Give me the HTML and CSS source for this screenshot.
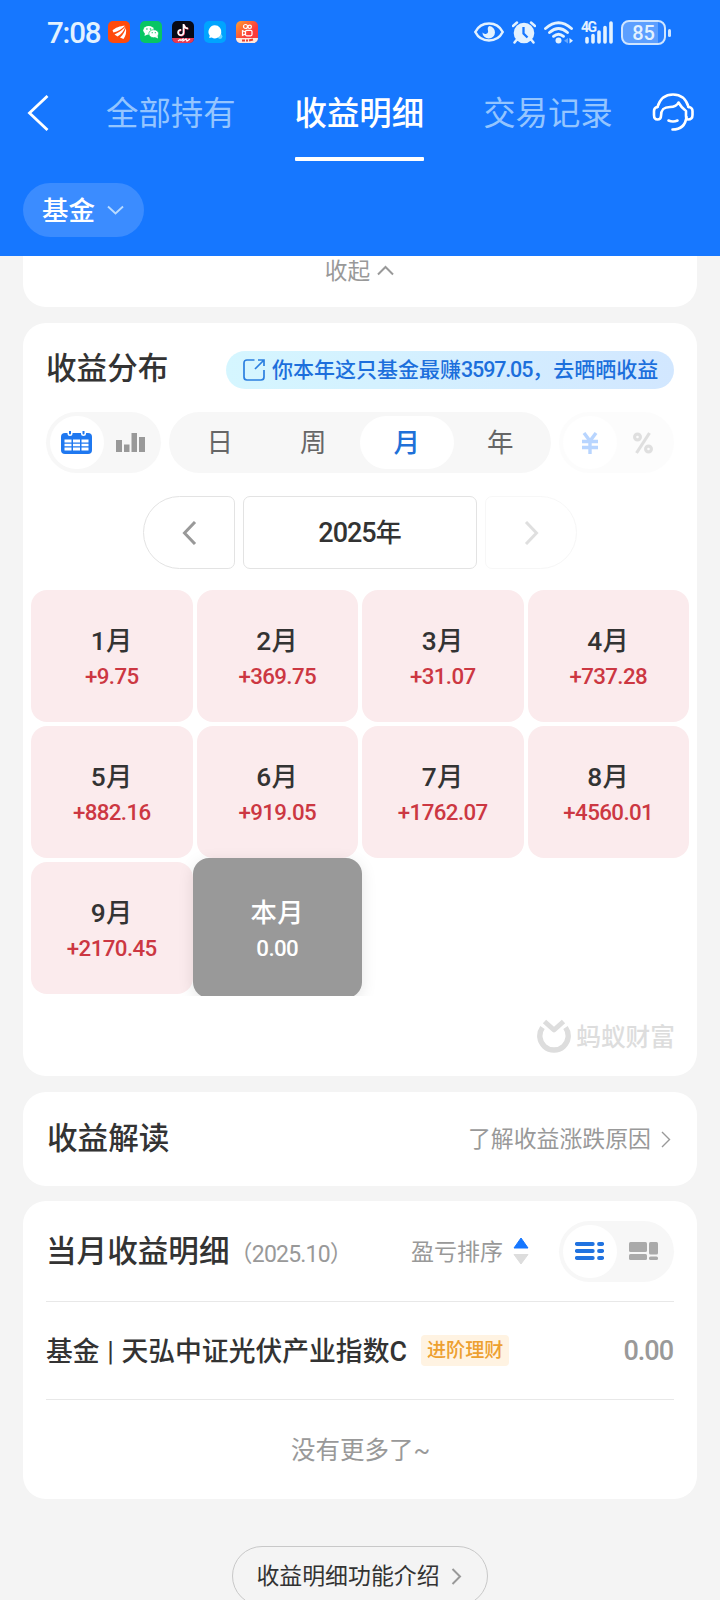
FILE: index.html
```html
<!DOCTYPE html>
<html lang="zh-CN">
<head>
<meta charset="utf-8">
<title>收益明细</title>
<link rel="stylesheet" href="styles.css">
</head>
<body>
<header class="header">
  <div class="status">
    <span class="time">7:08</span>
    <div class="apps">
      <svg class="app" viewBox="0 0 22 22"><rect width="22" height="22" rx="5" fill="#ff4a0c"/><path d="M4.500 9.500C7 7 12 4.800 17 4.800 14 8 10 10.500 5.500 11.500ZM6.500 13.500C11 11.500 15 8.500 17.500 5.500 16 10 13 13.500 9.500 15.500ZM12 16.500C15 14 17 10 17.800 7 18.700 11 17.800 15 15.500 18Z" fill="#fff"/></svg>
      <svg class="app" viewBox="0 0 22 22"><rect width="22" height="22" rx="5" fill="#07c664"/><ellipse cx="8.700" cy="9.300" rx="5.400" ry="4.400" fill="#fff"/><path d="M5 12l-.5 3 3-1.500z" fill="#fff"/><ellipse cx="13.700" cy="12.700" rx="4.900" ry="4" fill="#fff" stroke="#07c664" stroke-width=".7"/><path d="M15 16l3 1.500-.5-3z" fill="#fff"/><g fill="#07c664"><circle cx="6.900" cy="8" r=".8"/><circle cx="10.500" cy="8" r=".8"/><circle cx="12.200" cy="11.700" r=".6"/><circle cx="15.300" cy="11.700" r=".6"/></g></svg>
      <svg class="app" viewBox="0 0 22 22"><rect width="22" height="22" rx="5" fill="#080a16"/><path d="M0 17h22c0 3-2 5-5 5H5c-3 0-5-2-5-5Z" fill="#e63a52"/><path d="M6 20l2-1.500 1 1 2-1.500v2l3-2 1 2 3-2" fill="none" stroke="#fff" stroke-width="1.200"/><path d="M11.500 3v8.500a2.700 2.700 0 1 1-2.500-2.700M11.500 3.500q.8 3.500 4.500 4" fill="none" stroke="#f6435c" stroke-width="1.800" transform="translate(.5 .4)"/><path d="M11.500 3v8.500a2.700 2.700 0 1 1-2.500-2.700M11.500 3.500q.8 3.500 4.500 4" fill="none" stroke="#fff" stroke-width="1.700"/></svg>
      <svg class="app" viewBox="0 0 22 22"><rect width="22" height="22" rx="5" fill="#00a4ff"/><circle cx="16" cy="15.500" r="2.400" fill="#6fd6ff"/><path d="M10.700 4.200a6.600 6.600 0 1 1-3 12.400l-2.500.5.500-2.500A6.600 6.600 0 0 1 10.700 4.200Z" fill="#fff"/></svg>
      <svg class="app" viewBox="0 0 22 22"><defs><linearGradient id="ks" x1="0" y1="0" x2="1" y2="1"><stop offset="0" stop-color="#ffa02f"/><stop offset=".6" stop-color="#fb3b3b"/></linearGradient></defs><rect width="22" height="22" rx="5" fill="url(#ks)"/><path d="M0 17h22c0 3-2 5-5 5H5c-3 0-5-2-5-5Z" fill="#ffe9dd"/><path d="M6 19.500h3M10 19.500h2M13 19.500l4-1" stroke="#e64132" stroke-width="2.200"/><g fill="none" stroke="#fff" stroke-width="1.200"><circle cx="9.500" cy="5.500" r="2"/><circle cx="13.700" cy="5.800" r="1.700"/><rect x="9.500" y="9.300" width="6.500" height="5.500" rx="1.200"/><path d="M9.500 11 6.500 9.700v4.600l3-1.300"/></g></svg>
    </div>
    <div class="signals">
      <svg width="30" height="20" viewBox="0 0 30 20"><path d="M1.300 10C7-1.300 23-1.300 28.700 10 23 21.300 7 21.300 1.300 10Z" fill="none" stroke="#e3f2ff" stroke-width="2.500"/><path d="M15 4a6.300 6.300 0 1 1-6.600 6.500q1.800 2 4 1.200 2.500-1 1.400-4Q13.200 5.500 15 4Z" fill="#e3f2ff"/></svg>
      <svg width="24" height="23" viewBox="0 0 24 23"><circle cx="12" cy="12" r="10.300" fill="#e3f2ff"/><path d="M1 5 5 1.500M19 1.500 23 5M4.500 19 2.500 21.500M19.500 19l2 2.500" stroke="#e3f2ff" stroke-width="2.500" stroke-linecap="round"/><path d="M11.500 6v6.500l4 4" fill="none" stroke="#1677ff" stroke-width="2.300"/></svg>
      <svg width="29" height="23" viewBox="0 0 29 23"><g fill="none" stroke="#e3f2ff" stroke-width="2.900" stroke-linecap="round"><path d="M1.500 7.500Q14.500-4 27.500 7.500"/><path d="M5.500 11.500Q14.500 3.500 23.500 11.500"/><path d="M9.500 15.300Q14.500 11 19.500 15.300"/></g><circle cx="14.500" cy="19.500" r="3" fill="#e3f2ff"/><path d="m24 17-4 2.800 4 2.700z" fill="#65a8ff"/><path d="m25.500 17 3.500 2.800-3.500 2.700z" fill="#e3f2ff"/></svg>
      <div class="cell"><span class="net">4G</span><svg width="32" height="23" viewBox="0 0 32 23"><path d="M6 17.500v3.500M12 14.500v6.500M18 11v10M24 6.500V21M30 2v19" stroke="#e3f2ff" stroke-width="3.600" stroke-linecap="round"/></svg></div>
      <div class="battery"><span class="charge">85</span></div>
    </div>
  </div>
  <nav class="tabs">
    <svg class="back" width="22" height="36" viewBox="0 0 22 36"><path d="M20.500 1 2.500 18l18 17" fill="none" stroke="#fff" stroke-width="2.800"/></svg>
    <span class="tab">全部持有</span>
    <span class="tab tab-active">收益明细</span>
    <span class="tab tab-last">交易记录</span>
    <svg class="service" width="42" height="40" viewBox="0 0 42 40"><g fill="none" stroke="#fff" stroke-width="2.600" stroke-linecap="round" stroke-linejoin="round"><path d="M5.500 15C8 6.500 14 2.500 21 2.500s13 4 15.500 12.500"/><path d="M5.500 15Q2 15.500 2 19v4q0 4.500 3.500 4.500 3.500 0 3.500-3.500c0-7 3-9 9-9 4 0 7-1.500 8.500-4.500 2 3.500 4.500 6.500 7.500 8.500v5q0 3.500 2 3.500 4.500 0 4.500-4.500v-4q0-3.500-4-4"/><path d="M34.500 25c-1 8-6 12.500-14 12.500"/><path d="M16.500 28.500q4.500 2 9 0"/></g></svg>
  </nav>
  <button class="filter"><span class="filter-text">基金</span><svg width="17" height="11" viewBox="0 0 17 11"><path d="m1 1.500 7.500 7 7.500-7" fill="none" stroke="#b9dbff" stroke-width="1.900"/></svg></button>
</header>

<main class="main">
  <section class="card collapse">收起<svg width="17" height="11" viewBox="0 0 17 11"><path d="m1 9.500 7.500-7.500L16 9.500" fill="none" stroke="#999" stroke-width="2"/></svg></section>

  <section class="card dist">
    <div class="dist-head">
      <h2 class="title">收益分布</h2>
      <div class="banner"><svg width="22" height="22" viewBox="0 0 22 22"><g fill="none" stroke="#2b7fe0" stroke-width="1.700"><path d="M11.500 1H4Q1 1 1 4v14q0 3 3 3h14q3 0 3-3v-7"/><path d="M12 10 21 1M15 1h6v6"/></g></svg><span>你本年这只基金最赚<span class="banner-num">3597.05</span>，去晒晒收益</span></div>
    </div>
    <div class="controls">
      <div class="switch">
        <span class="opt opt-on"><svg width="31" height="23" viewBox="0 0 31 23"><rect y="2" width="31" height="21" rx="4" fill="#1f78f0"/><path d="M6.500 0v3q0 2 2.500 2t2.500-2V0ZM20 0v3q0 2 2.500 2T25 3V0Z" fill="#fff"/><path d="M8 0v2.500q0 1 1 1t1-1V0ZM21.500 0v2.500q0 1 1 1t1-1V0Z" fill="#1f78f0"/><path d="M3.500 8.500h7v3h-7zM12 8.500h7v3h-7zM20.500 8.500h7v3h-7zM3.500 12.800h7v2.500h-7zM12 12.800h7v2.500h-7zM20.500 12.800h7v2.500h-7zM3.500 16.500h7v3h-7zM12 16.500h7v3h-7zM20.500 16.500h7v3h-7z" fill="#fff"/></svg></span>
        <span class="opt"><svg width="29" height="19" viewBox="0 0 29 19"><path d="M0 7h6v12H0zM8 11.500h5.500V19H8zM15.500 0H21v19h-5.500zM23 4h6v15h-6z" fill="#999"/></svg></span>
      </div>
      <div class="segment"><span class="seg">日</span><span class="seg">周</span><span class="seg seg-on">月</span><span class="seg">年</span></div>
      <div class="switch switch-off">
        <span class="opt opt-on"><svg width="18" height="22" viewBox="0 0 18 22"><path d="m3 1 6 8 6-8M9 8v14M1 9.500h16M1 15.500h16" fill="none" stroke="#1677ff" stroke-width="3.400"/></svg></span>
        <span class="opt"><svg width="20" height="22" viewBox="0 0 20 22"><g fill="none" stroke="#999" stroke-width="3.200"><circle cx="4.500" cy="5" r="2.900"/><circle cx="15.500" cy="17" r="2.900"/><path d="M16.500 1 3.500 21"/></g></svg></span>
      </div>
    </div>
    <div class="years">
      <span class="step step-prev"><svg width="15" height="24" viewBox="0 0 15 24"><path d="M13 1 2.500 12 13 23" fill="none" stroke="#999" stroke-width="3"/></svg></span>
      <span class="year"><span class="year-num">2025</span>年</span>
      <span class="step step-next"><svg width="15" height="24" viewBox="0 0 15 24"><path d="m2 1 10.500 11L2 23" fill="none" stroke="#999" stroke-width="3"/></svg></span>
    </div>
    <div class="months">
      <div class="month"><b class="m-name">1月</b><span class="m-val">+9.75</span></div>
      <div class="month"><b class="m-name">2月</b><span class="m-val">+369.75</span></div>
      <div class="month"><b class="m-name">3月</b><span class="m-val">+31.07</span></div>
      <div class="month"><b class="m-name">4月</b><span class="m-val">+737.28</span></div>
      <div class="month"><b class="m-name">5月</b><span class="m-val">+882.16</span></div>
      <div class="month"><b class="m-name">6月</b><span class="m-val">+919.05</span></div>
      <div class="month"><b class="m-name">7月</b><span class="m-val">+1762.07</span></div>
      <div class="month"><b class="m-name">8月</b><span class="m-val">+4560.01</span></div>
      <div class="month"><b class="m-name">9月</b><span class="m-val">+2170.45</span></div>
      <div class="month month-now"><b class="m-name">本月</b><span class="m-val">0.00</span></div>
    </div>
    <div class="brand"><svg width="34" height="35" viewBox="0 0 34 35"><path d="M5.500 8.500a14.200 14.200 0 1 0 23 0" fill="none" stroke="#ddd" stroke-width="5.400"/><path d="m7.500 2.500 9.500 8.500 9.500-8.500" fill="none" stroke="#ddd" stroke-width="5" stroke-linejoin="round"/></svg><span class="brand-name">蚂蚁财富</span></div>
  </section>

  <section class="card insight">
    <h2 class="title">收益解读</h2>
    <span class="link">了解收益涨跌原因<svg width="10" height="17" viewBox="0 0 10 17"><path d="m1 1 7.500 7.500L1 16" fill="none" stroke="#999" stroke-width="1.400"/></svg></span>
  </section>

  <section class="card detail">
    <div class="detail-head">
      <h2 class="title">当月收益明细</h2><span class="period">（2025.10）</span>
      <span class="sort"><span class="sort-text">盈亏排序</span><svg width="16" height="28" viewBox="0 0 16 28"><path d="M8 1 15 11H1Z" fill="#1677ff" stroke="#1677ff" stroke-linejoin="round"/><path d="M8 27 1 17.500h14Z" fill="#ddd" stroke="#ddd" stroke-linejoin="round"/></svg></span>
      <div class="switch">
        <span class="opt opt-on"><svg width="29" height="18" viewBox="0 0 29 18"><path d="M1.800 2h16M1.800 9h16M1.800 16h16M24 2h3.200M24 9h3.200M24 16h3.200" stroke="#2173e0" stroke-width="3.800" stroke-linecap="round"/></svg></span>
        <span class="opt"><svg width="29" height="18" viewBox="0 0 29 18"><g fill="#aaa"><rect width="18" height="10" rx="1.500"/><rect y="12" width="18" height="6" rx="1.500"/><rect x="20" width="9" height="12.500" rx="1.500"/><rect x="20" y="14.500" width="9" height="3.500" rx="1.500"/></g></svg></span>
      </div>
    </div>
    <div class="fund">
      <span class="fund-name">基金 <span class="bar">|</span> 天弘中证光伏产业指数C</span>
      <span class="tag">进阶理财</span>
      <span class="amount">0.00</span>
    </div>
    <div class="end">没有更多了~</div>
  </section>

  <button class="intro"><span class="intro-text">收益明细功能介绍</span><svg width="11" height="17" viewBox="0 0 11 17"><path d="m1.500 1 7.500 7.500-7.500 7.500" fill="none" stroke="#999" stroke-width="2"/></svg></button>
</main>
</body>
</html>
```

FILE: styles.css
```css
* { box-sizing: border-box; }
body {
  margin: 0;
  height: 1600px;
  overflow: hidden;
  background: #f4f4f4;
  color: #333;
  font-family: Roboto, "Noto Sans CJK SC", sans-serif;
}
svg { display: block; flex: none; }
span, b, button, h2 { white-space: nowrap; }
button { font-family: inherit; }

.header { height: 256px; background: #1677ff; color: #fff; }
.status { display: flex; align-items: center; height: 64px; padding: 0 50px 0 47px; }
.time { width: 61px; padding-top: 2px; font-size: 29.500px; line-height: 30px; font-weight: 500; letter-spacing: -1.200px; color: #e3f2ff; }
.apps { display: flex; gap: 10px; }
.app { width: 22px; height: 22px; }
.signals { display: flex; align-items: center; gap: 8px; margin-left: auto; }
.cell { display: flex; position: relative; }
.net { position: absolute; left: 0; top: -1px; font-size: 14px; line-height: 14px; font-weight: 700; letter-spacing: -1.500px; color: #e3f2ff; }
.battery { position: relative; width: 45px; height: 25px; margin-right: 4px; border: 2px solid #cfe5ff; border-radius: 8px; background: linear-gradient(90deg, #5c9fff 85%, #2c82ff 85%); text-align: center; }
.battery::after { content: ""; position: absolute; right: -7px; top: 7px; width: 3px; height: 8px; border-radius: 2px; background: #cfe5ff; }
.charge { display: block; font-size: 20px; line-height: 22px; font-weight: 500; color: #e3f2ff; }

.tabs { display: flex; align-items: center; height: 97px; padding: 0 25px 0 27px; }
.back { margin-right: 57px; }
.tab { position: relative; height: 97px; margin-right: 59px; font-size: 32.400px; line-height: 101px; color: #94c5ff; }
.tab-active { color: #fff; font-weight: 500; }
.tab-active::after { content: ""; position: absolute; left: 0; right: 0; bottom: 0; height: 4px; border-radius: 1px; background: #fff; }
.tab-last { margin-right: 39px; }
.service { margin-top: -2px; }
.filter { display: flex; align-items: center; gap: 12px; width: 121px; height: 54px; margin: 22px 0 0 23px; padding: 0 0 0 19px; border: 0; border-radius: 27px; background: #3b8cff; color: #fff; font-size: 26.500px; font-weight: 500; }
.filter-text { margin-top: -3px; }

.main { display: flex; flex-direction: column; align-items: center; }
.card { width: 674px; border-radius: 23px; background: #fff; }
.title { margin: 0; padding-top: 1px; font-size: 30.600px; line-height: 44px; font-weight: 500; }
.collapse { display: flex; justify-content: center; gap: 7px; height: 51px; padding-right: 1px; border-radius: 0 0 23px 23px; color: #999; font-size: 22.700px; line-height: 31px; }
.collapse svg { margin-top: 9px; }

.dist { height: 753px; margin-top: 16px; padding: 23px 8px 0; }
.dist-head { display: flex; align-items: center; justify-content: space-between; height: 44px; padding: 0 15px; }
.banner { display: flex; align-items: center; gap: 7px; width: 448px; height: 38px; margin-top: 4px; padding-left: 17px; border-radius: 19px; background: linear-gradient(90deg, #d5f6ff, #d2e7ff); color: #1c6fdc; font-size: 21px; line-height: 38px; font-weight: 500; }
.banner-num { letter-spacing: -1.150px; font-size: 21.500px; }
.controls { display: flex; gap: 8px; margin: 22px 15px 0; }
.switch { display: flex; width: 115px; height: 61px; padding: 4px; border-radius: 31px; background: #f7f7f7; }
.switch-off { opacity: .3; }
.opt { display: flex; align-items: center; justify-content: center; width: 54px; height: 53px; border-radius: 27px; }
.opt-on { background: #fff; }
.segment { display: flex; width: 382px; height: 61px; padding: 4px; border-radius: 31px; background: #f7f7f7; }
.seg { flex: 1; height: 53px; border-radius: 27px; text-align: center; font-size: 26.500px; line-height: 54px; color: #666; }
.seg-on { background: #fff; color: #2070d8; font-weight: 500; }
.years { display: flex; justify-content: center; gap: 8px; margin-top: 23px; }
.step { display: flex; align-items: center; justify-content: center; width: 92px; height: 73px; border: 1px solid #e3e3e3; }
.step-prev { border-radius: 37px 7px 7px 37px; }
.step-next { border-radius: 7px 37px 37px 7px; opacity: .3; }
.year { width: 234px; height: 73px; border: 1px solid #e3e3e3; border-radius: 7px; text-align: center; font-size: 26px; line-height: 73px; font-weight: 500; }
.year-num { font-size: 27px; letter-spacing: -1px; }
.months { display: grid; grid-template-columns: repeat(4, 1fr); grid-auto-rows: 132px; gap: 4px; height: 427px; margin-top: 21px; clip-path: inset(-10px -10px 21px -10px); }
.month { display: flex; flex-direction: column; align-items: center; padding-top: 33px; border-radius: 16px; background: #fbebed; }
.m-name { font-size: 26.300px; line-height: 36px; font-weight: 500; letter-spacing: .5px; }
.m-val { font-size: 22.300px; line-height: 26px; margin-top: 4px; font-weight: 500; letter-spacing: -.6px; color: #cc3742; }
.month-now { margin: -4px; padding-top: 37px; background: #999; color: #fff; box-shadow: 0 4px 16px rgba(0, 0, 0, .1); }
.month-now .m-val { color: #fff; }
.brand { display: flex; align-items: center; justify-content: flex-end; gap: 5px; margin-top: 1px; padding-right: 14px; font-size: 24.700px; line-height: 37px; font-weight: 500; color: #ddd; }
.brand-name { padding-top: 3px; line-height: 34px; }

.insight { display: flex; align-items: center; justify-content: space-between; height: 94px; margin-top: 16px; padding: 0 26px 0 24px; }
.link { display: flex; align-items: center; gap: 10px; padding-top: 1px; font-size: 22.900px; line-height: 32px; color: #999; }
.insight .title { padding: 0; }

.detail { height: 298px; margin-top: 15px; padding: 0 23px; }
.detail-head { display: flex; align-items: center; height: 101px; border-bottom: 1px solid #e8e8e8; }
.detail-head .title { padding-top: 2px; }
.period { margin-top: 2px; font-size: 23px; letter-spacing: -.8px; color: #999; }
.sort { display: flex; align-items: center; gap: 10px; margin: 0 30px 0 auto; font-size: 23px; line-height: 30px; color: #999; }
.sort-text { padding-top: 3px; }
.fund { display: flex; align-items: center; height: 98px; border-bottom: 1px solid #e8e8e8; }
.fund-name { margin-top: -3px; font-size: 26.800px; font-weight: 500; }
.bar { font-weight: 400; margin: 0 1px; }
.tag { height: 31px; margin-left: 14px; padding: 0 6px; border-radius: 4px; background: #fff3e2; color: #eda02f; font-size: 19.100px; line-height: 32px; font-weight: 500; }
.amount { margin: 1px 0 0 auto; font-size: 27px; font-weight: 500; letter-spacing: -1px; padding-right: 1px; color: #999; }
.end { padding-left: 1px; text-align: center; font-size: 24.500px; line-height: 102px; height: 99px; color: #999; }

.intro { display: flex; align-items: center; justify-content: center; gap: 11px; width: 256px; height: 60px; margin-top: 47px; padding: 0 2px 0 0; border: 1px solid #c8c8c8; border-radius: 30px; background: none; color: #333; font-size: 22.900px; }
.intro-text { margin-top: -4px; }
```
